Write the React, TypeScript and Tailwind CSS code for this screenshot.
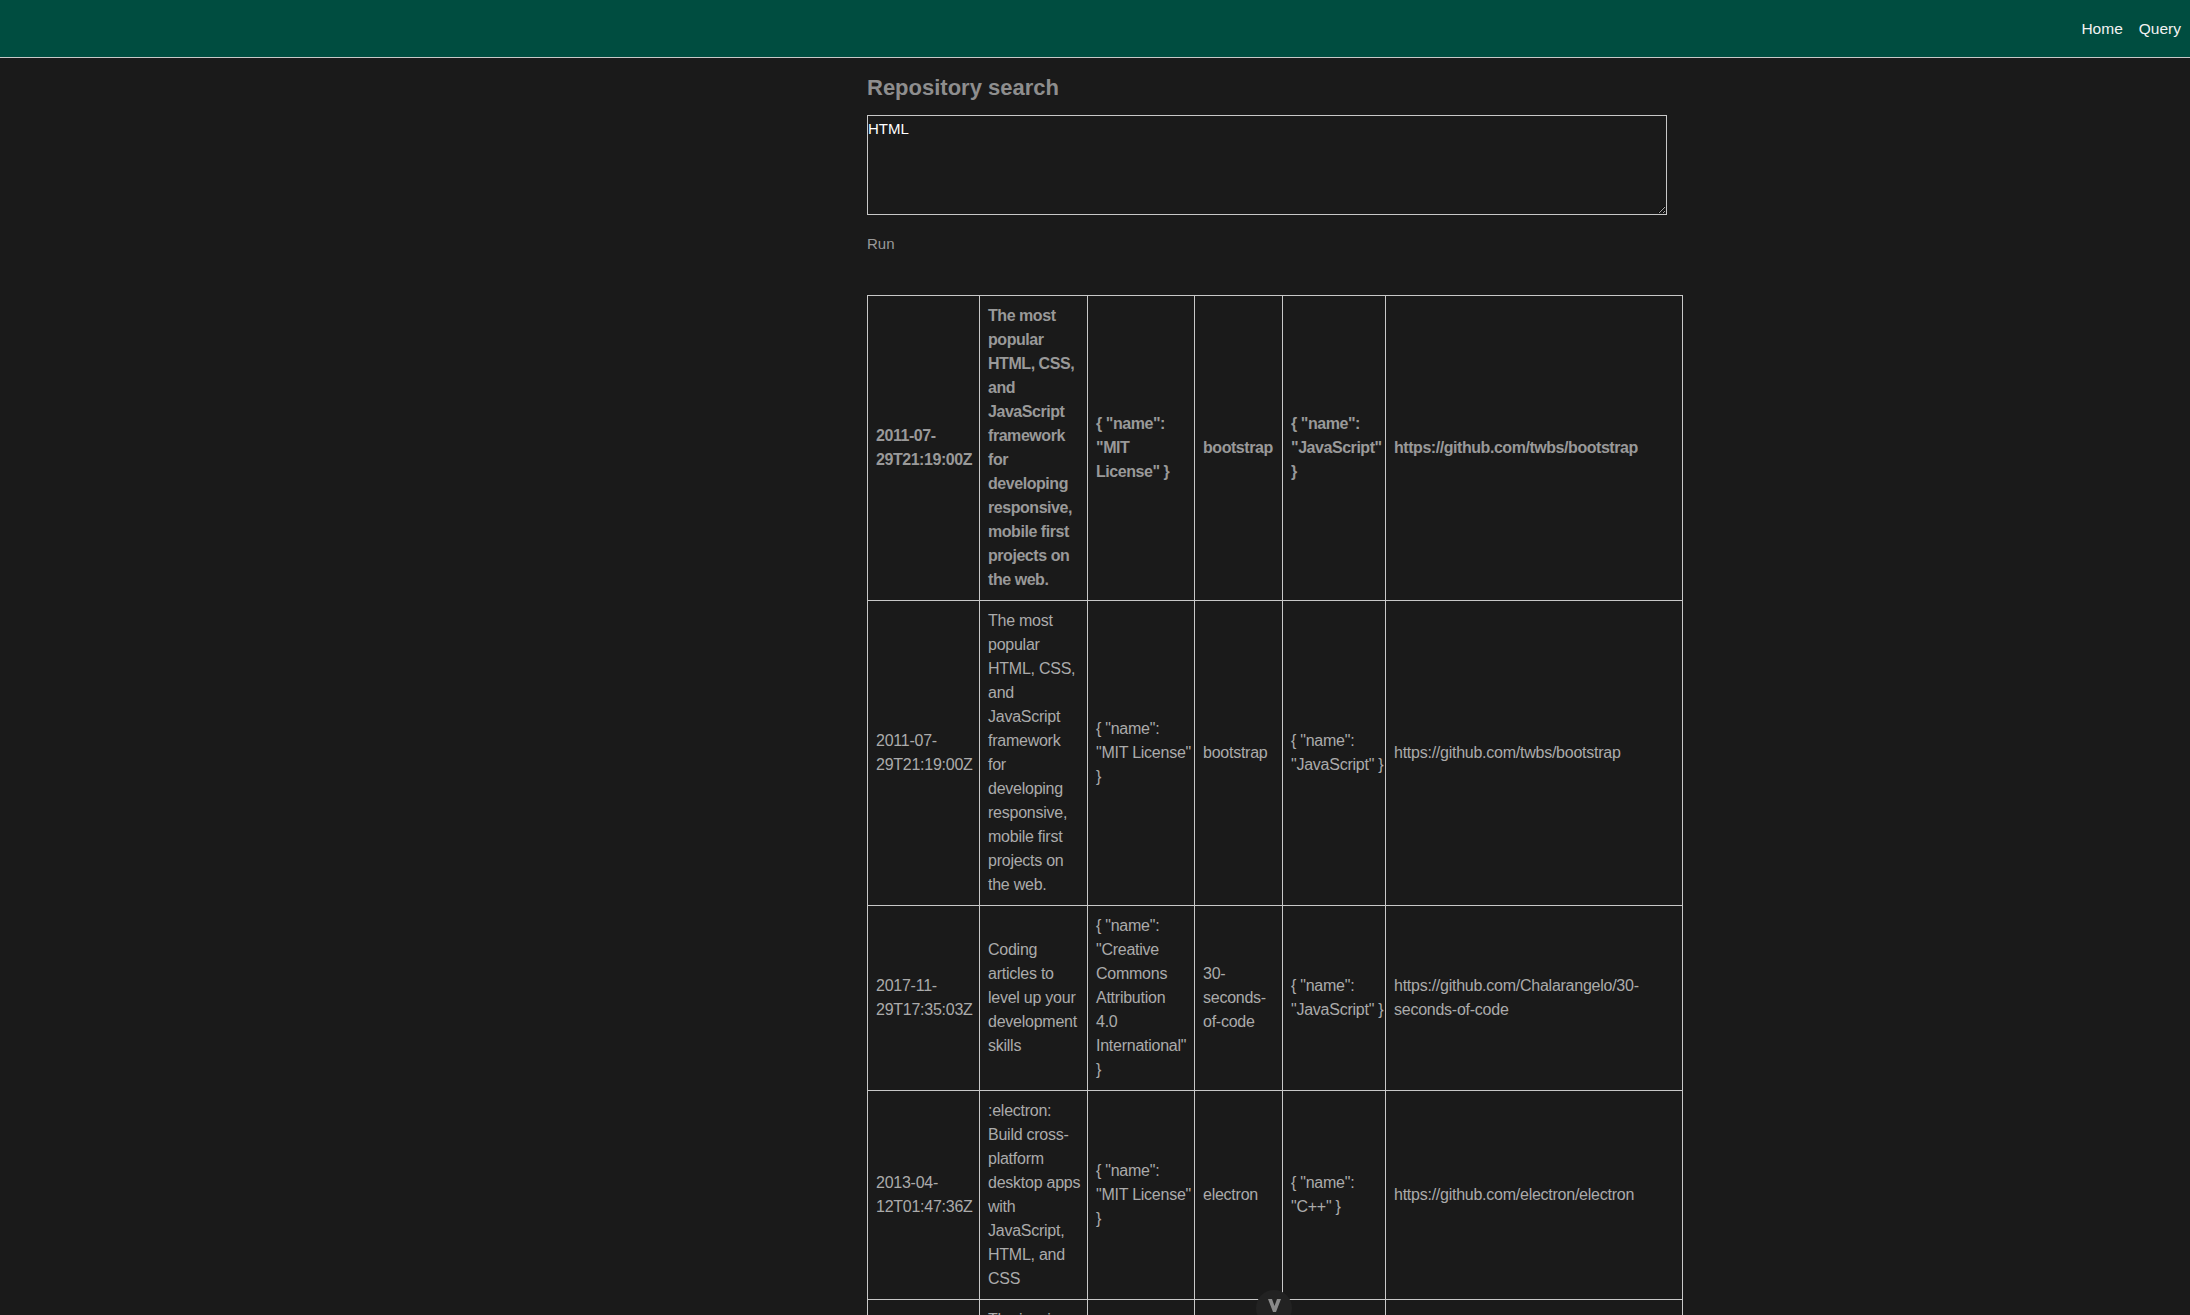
import { useState } from "react";

type Row = {
  created: string[];
  description: string[];
  license: string[];
  name: string[];
  language: string[];
  url: string[];
};

// first row is rendered as the bold header row
const header: Row = {
  created: ["2011-07-", "29T21:19:00Z"],
  description: [
    "The most",
    "popular",
    "HTML, CSS,",
    "and",
    "JavaScript",
    "framework",
    "for",
    "developing",
    "responsive,",
    "mobile first",
    "projects on",
    "the web.",
  ],
  license: ['{ "name":', '"MIT', 'License" }'],
  name: ["bootstrap"],
  language: ['{ "name":', '"JavaScript"', "}"],
  url: ["https://github.com/twbs/bootstrap"],
};

const rows: Row[] = [
  {
    created: ["2011-07-", "29T21:19:00Z"],
    description: header.description,
    license: ['{ "name":', '"MIT License"', "}"],
    name: ["bootstrap"],
    language: ['{ "name":', '"JavaScript" }'],
    url: ["https://github.com/twbs/bootstrap"],
  },
  {
    created: ["2017-11-", "29T17:35:03Z"],
    description: ["Coding", "articles to", "level up your", "development", "skills"],
    license: [
      '{ "name":',
      '"Creative',
      "Commons",
      "Attribution",
      "4.0",
      'International"',
      "}",
    ],
    name: ["30-", "seconds-", "of-code"],
    language: ['{ "name":', '"JavaScript" }'],
    url: ["https://github.com/Chalarangelo/30-", "seconds-of-code"],
  },
  {
    created: ["2013-04-", "12T01:47:36Z"],
    description: [
      ":electron:",
      "Build cross-",
      "platform",
      "desktop apps",
      "with",
      "JavaScript,",
      "HTML, and",
      "CSS",
    ],
    license: ['{ "name":', '"MIT License"', "}"],
    name: ["electron"],
    language: ['{ "name":', '"C++" }'],
    url: ["https://github.com/electron/electron"],
  },
  {
    created: ["2012-02-", "17T14:19:43Z"],
    description: ["The iconic", "SVG, font,", "and CSS", "toolkit"],
    license: ['{ "name":', '"Other" }'],
    name: ["Font-", "Awesome"],
    language: ['{ "name":', '"JavaScript" }'],
    url: ["https://github.com/FortAwesome/Font-", "Awesome"],
  },
];

const keys: (keyof Row)[] = ["created", "description", "license", "name", "language", "url"];

function Lines({ lines }: { lines: string[] }) {
  return (
    <>
      {lines.map((l, i) => (
        <div key={i}>{l}</div>
      ))}
    </>
  );
}

export default function App() {
  const [query, setQuery] = useState("HTML");

  return (
    <div className="h-screen overflow-y-auto bg-[#1a1a1a] font-['Liberation_Sans',Arial,sans-serif] [scrollbar-width:none]">
      <header className="flex h-[58px] items-center justify-end gap-4 border-b border-[#c8c8c8] bg-[#004d40] pr-[9px] text-[15.5px] text-[#f2f2f2]">
        <a href="#">Home</a>
        <a href="#">Query</a>
      </header>

      <main className="pb-16 pl-[867px] pt-4">
        <h2 className="text-[22px] font-bold leading-7 text-[#8e8e8e]">Repository search</h2>
        <textarea
          value={query}
          onChange={(e) => setQuery(e.target.value)}
          className="mt-[13px] block h-[100px] w-[800px] border border-[#c8c8c8] bg-transparent px-0 pt-1 text-[15px] leading-[17px] text-white outline-none [color-scheme:dark]"
        />
        <button className="mt-5 block p-0 text-[15px] leading-[17px] text-[#999]">Run</button>

        <table className="mt-[43px] w-[815px] table-fixed border-collapse text-[16px] leading-6 tracking-[-0.25px]">
          <colgroup>
            <col className="w-[112px]" />
            <col className="w-[108px]" />
            <col className="w-[107px]" />
            <col className="w-[88px]" />
            <col className="w-[103px]" />
            <col className="w-[297px]" />
          </colgroup>
          <thead>
            <tr>
              {keys.map((k) => (
                <th
                  key={k}
                  className="whitespace-nowrap border border-[#c8c8c8] p-2 text-left align-middle font-bold tracking-[-0.45px] text-[#999]"
                >
                  <Lines lines={header[k]} />
                </th>
              ))}
            </tr>
          </thead>
          <tbody>
            {rows.map((r, i) => (
              <tr key={i}>
                {keys.map((k) => (
                  <td
                    key={k}
                    className="whitespace-nowrap border border-[#c8c8c8] p-2 align-middle text-[#ababab]"
                  >
                    <Lines lines={r[k]} />
                  </td>
                ))}
              </tr>
            ))}
          </tbody>
        </table>
      </main>

      <button
        aria-label="Scroll down"
        className="fixed bottom-[-11px] left-[1256px] flex h-9 w-9 justify-center rounded-full bg-[#222] pt-[9px]"
      >
        <svg width="13" height="13" viewBox="0 0 13 13">
          <path d="M0 0h4l2.5 7L9 0h4L8 13H5z" fill="#8a8a8a" />
        </svg>
      </button>
    </div>
  );
}
